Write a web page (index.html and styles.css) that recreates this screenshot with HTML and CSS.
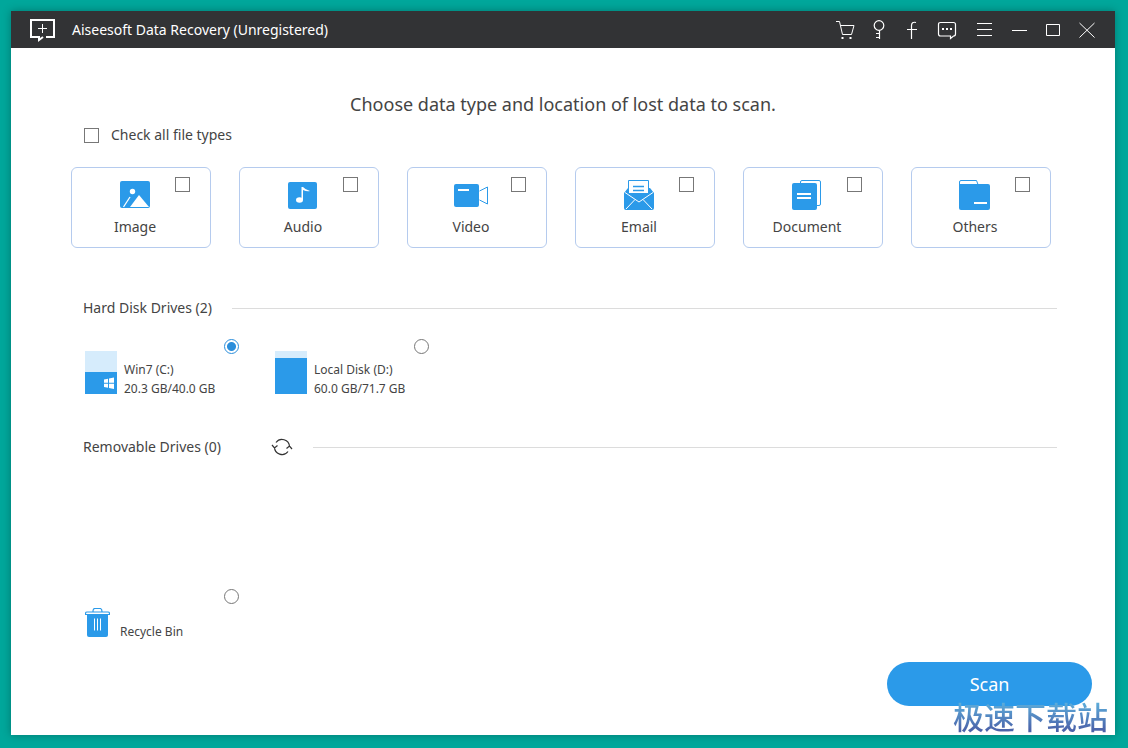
FILE: index.html
```html
<!DOCTYPE html>
<html lang="en">
<head>
<meta charset="utf-8">
<title>Aiseesoft Data Recovery</title>
<link rel="stylesheet" href="styles.css">
</head>
<body>
<div class="window">
  <header class="titlebar">
    <svg class="logo" width="27" height="24" viewBox="0 0 27 24" fill="none" stroke="#fff" stroke-width="2"><path d="M17 19H25V2H2v17h8v3l4-3"/><path d="M13.500 6v9M9 10.500h9" stroke-width="1"/></svg>
    <span class="app-name">Aiseesoft Data Recovery (Unregistered)</span>
    <nav class="tools">
      <button class="tool" aria-label="Buy"><svg width="20" height="20" viewBox="0 0 20 20" fill="none" stroke="#fff"><path d="M1 1.500h3.500l3 13h9l2.500-9H5.500"/><path d="M6.500 17h2v2h-2zM14.500 17h2v2h-2z" fill="#fff" stroke="none"/></svg></button>
      <button class="tool" aria-label="Register"><svg width="20" height="20" viewBox="0 0 20 20" fill="none" stroke="#fff" stroke-width="1.200"><circle cx="10" cy="5.500" r="4.800"/><path d="M10.500 10.500v8.500M10.500 13.500H7M10.500 17.500H7"/></svg></button>
      <button class="tool" aria-label="Facebook"><svg width="20" height="20" viewBox="0 0 20 20" fill="none" stroke="#fff" stroke-width="1.200"><path d="M13 2.500c-3-.8-4.500.5-4.500 3V19M4 9.500h10"/></svg></button>
      <button class="tool" aria-label="Feedback"><svg width="20" height="20" viewBox="0 0 20 20" fill="none" stroke="#fff" stroke-width="1.200"><path d="M3.500 2.500h13q2 0 2 2v9.500q0 2-2 2l-3 2.500v-2.500h-10q-2 0-2-2V4.500q0-2 2-2z"/><path d="M5 8h2v2H5zM9 8h2v2H9zM13 8h2v2h-2z" fill="#fff" stroke="none"/></svg></button>
      <button class="tool menu" aria-label="Menu"><svg width="20" height="20" viewBox="0 0 20 20" stroke="#fff"><path d="M2 3.500h15M2 9.500h15M2 15.500h15"/></svg></button>
      <button class="tool" aria-label="Minimize"><svg width="20" height="20" viewBox="0 0 20 20" stroke="#fff"><path d="M3 10.500h15"/></svg></button>
      <button class="tool" aria-label="Maximize"><svg width="20" height="20" viewBox="0 0 20 20" fill="none" stroke="#fff"><path d="M3.500 4.500h13v11h-13z"/></svg></button>
      <button class="tool" aria-label="Close"><svg width="20" height="20" viewBox="0 0 20 20" stroke="#fff"><path d="M2.500 3l15 14.500M17.500 3l-15 14.500"/></svg></button>
    </nav>
  </header>
  <main class="content">
    <h1 class="heading">Choose data type and location of lost data to scan.</h1>
    <label class="check-all"><input class="box" type="checkbox"><span>Check all file types</span></label>
    <div class="types">
      <label class="type">
        <span class="type-main"><svg width="36" height="32" viewBox="0 0 36 32"><rect x="3" y="2" width="30" height="27" rx="2" fill="#2b9ae9"/><circle cx="15.500" cy="12.500" r="2.700" fill="#fff"/><path d="M13 28l9-12 10 12z" fill="#fff"/><path d="M6.500 28l6.500-10" stroke="#fff" stroke-width="1.300"/></svg><span>Image</span></span>
        <input class="box" type="checkbox">
      </label>
      <label class="type">
        <span class="type-main"><svg width="36" height="32" viewBox="0 0 36 32"><rect x="3" y="3" width="29" height="27" rx="2" fill="#2b9ae9"/><ellipse cx="14.500" cy="21" rx="3.500" ry="2.700" fill="#fff"/><path d="M16.500 21V8h1.500q2 2.500 7 4-3 .8-7-1v10z" fill="#fff"/></svg><span>Audio</span></span>
        <input class="box" type="checkbox">
      </label>
      <label class="type">
        <span class="type-main"><svg width="36" height="32" viewBox="0 0 36 32"><rect x="1" y="5" width="25" height="23" rx="2" fill="#2b9ae9"/><path d="M5 11h11" stroke="#fff" stroke-width="2"/><path d="M26.500 12l8-4v17l-8-4" fill="none" stroke="#2b9ae9"/></svg><span>Video</span></span>
        <input class="box" type="checkbox">
      </label>
      <label class="type">
        <span class="type-main"><svg width="36" height="32" viewBox="0 0 36 32"><path d="M3 14l4-5h22l4 5v15q0 2-2 2H5q-2 0-2-2z" fill="#2b9ae9"/><path d="M7.500 14V1.500h20V14L18 21z" fill="#fff" stroke="#2b9ae9"/><path d="M12 7.500h11M12 11.500h11" stroke="#2b9ae9" stroke-width="1.600"/><path d="M7 14h21l-10 8z" fill="#2b9ae9"/><path d="M4 13.500l14 9.500 14-9.500M5 30l9-9.500M31 30l-9-9.500" fill="none" stroke="#fff"/></svg><span>Email</span></span>
        <input class="box" type="checkbox">
      </label>
      <label class="type">
        <span class="type-main"><svg width="36" height="32" viewBox="0 0 36 32"><path d="M11.500 5V3q0-1.500 1.500-1.500h17q1.500 0 1.500 1.500v22q0 1.500-1.500 1.500h-3" fill="none" stroke="#2b9ae9"/><rect x="3" y="4" width="25" height="27" rx="2" fill="#2b9ae9"/><path d="M8 15h14M8 19h14" stroke="#fff" stroke-width="2"/></svg><span>Document</span></span>
        <input class="box" type="checkbox">
      </label>
      <label class="type">
        <span class="type-main"><svg width="36" height="32" viewBox="0 0 36 32"><path d="M2.500 8V3q0-1.500 1.500-1.500h15.500l1.500 4" fill="none" stroke="#2b9ae9"/><path d="M2 5h29q2 0 2 2v22q0 2-2 2H4q-2 0-2-2z" fill="#2b9ae9"/><path d="M17 24h13" stroke="#fff" stroke-width="2"/></svg><span>Others</span></span>
        <input class="box" type="checkbox">
      </label>
    </div>
    <section class="group hard">
      <h2 class="group-title"><span>Hard Disk Drives (2)</span></h2>
      <div class="drives">
        <label class="drive">
          <svg class="disk" width="32" height="43" viewBox="0 0 32 43"><path d="M0 0h32v43H0z" fill="#d6ecfc"/><path d="M0 21h32v22H0z" fill="#2b9ae9"/><path d="M19 28.500l4-.8v4h-4zM24 27.500l5-1v5.200h-5zM19 32.700h4v4l-4-.8zM24 32.700h5v5.200l-5-1z" fill="#fff"/></svg>
          <span class="drive-text">Win7 (C:)<br>20.3 GB/40.0 GB</span>
          <input class="dot" type="radio" name="location" checked>
        </label>
        <label class="drive">
          <svg class="disk" width="32" height="43" viewBox="0 0 32 43"><path d="M0 0h32v43H0z" fill="#d6ecfc"/><path d="M0 7h32v36H0z" fill="#2b9ae9"/></svg>
          <span class="drive-text">Local Disk (D:)<br>60.0 GB/71.7 GB</span>
          <input class="dot" type="radio" name="location">
        </label>
      </div>
    </section>
    <section class="group removable">
      <h2 class="group-title"><span>Removable Drives (0)</span>
        <button class="refresh" aria-label="Refresh"><svg width="22" height="18" viewBox="0 0 22 18" fill="none" stroke="#333" stroke-width="1.200"><path d="M5 4.500A7.500 7.500 0 0 1 18.500 8.500M17 13.500A7.500 7.500 0 0 1 3.500 9M1 7l2.500 3 3-2.500M15.500 10.500l3-2.500 2.500 3"/></svg></button>
      </h2>
    </section>
    <label class="drive bin">
      <svg class="can" width="25" height="30" viewBox="0 0 25 30"><path d="M2 7h21v20q0 2-2 2H4q-2 0-2-2z" fill="#2b9ae9"/><path d="M.5 6.500v-1q0-1.500 1.500-1.500h21q1.500 0 1.500 1.500v1zM8 3.500q0-3 2-3h5q2 0 2 3" fill="#fff" stroke="#2b9ae9" stroke-width="1.200"/><path d="M9.500 10.500v12M12.500 10.500v12M15.500 10.500v12" stroke="#fff"/></svg>
      <span class="bin-text">Recycle Bin</span>
      <input class="dot" type="radio" name="location">
    </label>
    <button class="scan">Scan</button>
  </main>
</div>
<div class="watermark" lang="zh">极速下载站</div>
</body>
</html>
```
FILE: styles.css
```css
* { box-sizing: border-box; }

body {
  margin: 0;
  min-height: 100vh;
  padding: 11px 13px 13px 11px;
  display: flex;
  background: #00a79b;
  color: #444;
  font-family: "Noto Sans", "Noto Sans CJK SC", sans-serif;
  font-size: 14px;
  line-height: 20px;
}

button { padding: 0; border: 0; background: none; font: inherit; }
svg { display: block; flex: none; }
input { margin: 0; flex: none; appearance: none; background: #fff; }

.window {
  flex: 1;
  display: flex;
  flex-direction: column;
  background: #fff;
  box-shadow: 0 0 8px rgba(0, 50, 45, 0.4);
}

.titlebar {
  height: 37px;
  padding: 0 18px;
  display: flex;
  align-items: center;
  gap: 16px;
  background: #323335;
  color: #fff;
}

.tools { margin-left: auto; display: flex; gap: 14px; }
.tool { width: 20px; height: 20px; }
.menu { margin-left: 4px; }

.content {
  flex: 1;
  padding: 44px 60px 29px;
  display: flex;
  flex-direction: column;
}

.heading {
  margin: 0;
  text-align: center;
  font-size: 18px;
  font-weight: 400;
  line-height: 24px;
}

.check-all {
  margin: 9px 0 22px 13px;
  align-self: flex-start;
  display: flex;
  align-items: center;
  gap: 12px;
}

.box { width: 15px; height: 15px; border: 1px solid #777; }

.types {
  margin-right: 4px;
  display: grid;
  grid-template-columns: repeat(6, 1fr);
  gap: 28px;
}

.type {
  height: 81px;
  padding: 9px 20px 0 23px;
  display: flex;
  align-items: flex-start;
  border: 1px solid #b5cbee;
  border-radius: 6px;
}

.type-main {
  flex: 1;
  display: flex;
  flex-direction: column;
  align-items: center;
  gap: 6px;
}

.type-main svg { margin-top: 2px; }

.group-title {
  margin: 0 -2px 0 12px;
  display: flex;
  align-items: center;
  gap: 20px;
  font-size: 14px;
  font-weight: 400;
}

.group-title::after { content: ""; flex: 1; height: 1px; background: #dcdcdc; }

.hard { margin-top: 50px; }
.drives { margin: 21px 0 0 14px; display: flex; gap: 36px; }

.drive {
  width: 154px;
  display: flex;
  align-items: flex-start;
  gap: 7px;
  font-size: 12px;
  line-height: 19px;
}

.disk { margin-top: 12px; }
.drive-text { margin-top: 21px; white-space: nowrap; }

.dot {
  width: 15px;
  height: 15px;
  margin-left: auto;
  border: 1px solid #777;
  border-radius: 50%;
}

.dot:checked {
  border-color: #2b8edb;
  background: radial-gradient(circle, #2b8edb 4px, #fff 5px);
}

.removable { margin-top: 39px; }
.refresh { margin-left: 30px; }

.bin { margin: 132px 0 0 14px; gap: 10px; }
.can { margin-top: 19px; }
.bin-text { margin-top: 33px; }

.scan {
  width: 205px;
  height: 44px;
  margin: auto -37px 0 0;
  align-self: flex-end;
  border-radius: 22px;
  background: #2b9ae9;
  color: #fff;
  font-size: 18px;
}

.watermark {
  position: absolute;
  right: 20px;
  bottom: 14px;
  font-family: "Noto Sans CJK SC", sans-serif;
  font-size: 31px;
  font-weight: 500;
  line-height: 36px;
  background: linear-gradient(#5cabd9 15%, #4b62a9 90%);
  background-clip: text;
  -webkit-background-clip: text;
  color: transparent;
}
```
